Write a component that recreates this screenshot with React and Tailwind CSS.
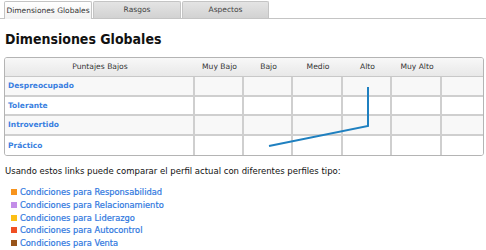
import React from "react";

const cols = ["Muy Bajo", "Bajo", "Medio", "Alto", "Muy Alto"];
const rows = ["Despreocupado", "Tolerante", "Introvertido", "Práctico"];
const perfiles = [
  ["Responsabilidad", "bg-[#f7941d]"],
  ["Relacionamiento", "bg-[#c38ee8]"],
  ["Liderazgo", "bg-[#fcbf16]"],
  ["Autocontrol", "bg-[#f04f23]"],
  ["Venta", "bg-[#98541a]"],
];

const App = () => {
  return (
    <div className="w-[486px] h-[250px] bg-white font-['DejaVu_Sans',sans-serif] text-[#222] overflow-hidden">
      {/* tabs */}
      <div className="flex items-end h-[19px] pt-[2px] pl-[4px] border-b border-[#c4c4c4]">
        <div className="w-[88px] flex items-center justify-center text-[7.5px] text-[#333] bg-gradient-to-b from-white to-[#f1f1f1] border border-b-0 border-[#c4c4c4] rounded-t-[2px] -mb-px h-[18px]">
          Dimensiones Globales
        </div>
        <div className="ml-[1px] w-[88px] h-[17px] flex items-center justify-center text-[7.5px] text-[#444] bg-gradient-to-b from-[#e4e4e4] to-[#d2d2d2] border border-b-0 border-[#c4c4c4] rounded-t-[2px]">
          Rasgos
        </div>
        <div className="ml-[1px] w-[87px] h-[17px] flex items-center justify-center text-[7.5px] text-[#444] bg-gradient-to-b from-[#e4e4e4] to-[#d2d2d2] border border-b-0 border-[#c4c4c4] rounded-t-[2px]">
          Aspectos
        </div>
      </div>

      <h1 className="pl-[5px] mt-[12px] font-['DejaVu_Sans_Condensed','DejaVu_Sans',sans-serif] text-[14px] leading-[16px] font-bold text-[#111]">
        Dimensiones Globales
      </h1>

      {/* table */}
      <div className="relative ml-[4px] mt-[10px] w-[480px] border border-[#b4b4b4] rounded-[3px] overflow-hidden">
        <div className="grid grid-cols-[190px_49px_49px_50px_49px_50px_1fr] text-[7.6px]">
          <div className="h-[19px] flex items-center justify-center bg-gradient-to-b from-[#f8f8f8] to-[#e8e8e8] border-b border-[#c8c8c8] text-[#333]">
            Puntajes Bajos
          </div>
          {cols.map((c) => (
            <div key={c} className="h-[19px] flex items-center justify-center bg-gradient-to-b from-[#f8f8f8] to-[#e8e8e8] border-b border-[#c8c8c8] text-[#333]">
              {c}
            </div>
          ))}
          <div className="h-[19px] bg-gradient-to-b from-[#f8f8f8] to-[#e8e8e8] border-b border-[#c8c8c8]" />
          {rows.map((r, i) => (
            <React.Fragment key={r}>
              <div className={`h-[19.5px] flex items-center pl-[3px] font-bold text-[7.5px] text-[#3a7fe0] border-r-2 border-[#cfcfcf] ${i < 3 ? "border-b-2" : ""} ${i % 2 === 0 ? "bg-[#f8f8f8]" : "bg-white"}`}>
                {r}
              </div>
              {[0, 1, 2, 3, 4, 5].map((j) => (
                <div
                  key={j}
                  className={`h-[19.5px] border-[#cfcfcf] ${j < 5 ? "border-r-2" : ""} ${i < 3 ? "border-b-2" : ""} ${i % 2 === 0 ? "bg-[#f8f8f8]" : "bg-white"}`}
                />
              ))}
            </React.Fragment>
          ))}
        </div>
        <svg className="absolute left-0 top-0 pointer-events-none" width="480" height="98">
          <polyline points="363,29 363,68 264,88" fill="none" stroke="#1f80c0" strokeWidth="2" />
        </svg>
      </div>

      <p className="pl-[5px] mt-[10px] text-[8.5px] leading-[11px] text-[#111]">
        Usando estos links puede comparar el perfil actual con diferentes perfiles tipo:
      </p>

      <ul className="pl-[11px] mt-[9px] flex flex-col">
        {perfiles.map(([name, color]) => (
          <li key={name} className="flex items-center gap-[3px] h-[12.7px]">
            <span className={`w-[6px] h-[6px] ${color}`} />
            <a className="text-[8.3px] text-[#2f78e0] [-webkit-text-stroke:0.2px_#2f78e0]">Condiciones para {name}</a>
          </li>
        ))}
      </ul>
    </div>
  );
};

export default App;
